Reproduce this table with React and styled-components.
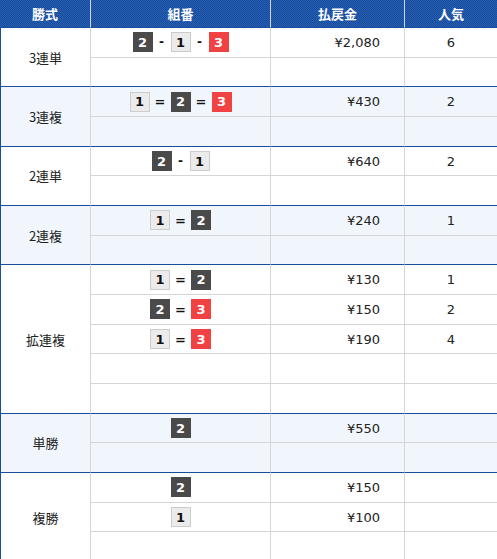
import styled, { createGlobalStyle } from "styled-components";

const GlobalStyle = createGlobalStyle`
    html, body {
        margin: 0;
        padding: 0;
        overflow: hidden;
        background: #fff;
    }
`;

const results = [
    { type: "3連単", rows: [{ combo: [2, "-", 1, "-", 3], pay: "¥2,080", pop: "6" }, {}] },
    { type: "3連複", rows: [{ combo: [1, "=", 2, "=", 3], pay: "¥430", pop: "2" }, {}] },
    { type: "2連単", rows: [{ combo: [2, "-", 1], pay: "¥640", pop: "2" }, {}] },
    { type: "2連複", rows: [{ combo: [1, "=", 2], pay: "¥240", pop: "1" }, {}] },
    {
        type: "拡連複",
        rows: [
            { combo: [1, "=", 2], pay: "¥130", pop: "1" },
            { combo: [2, "=", 3], pay: "¥150", pop: "2" },
            { combo: [1, "=", 3], pay: "¥190", pop: "4" },
            {},
            {},
        ],
    },
    { type: "単勝", rows: [{ combo: [2], pay: "¥550", pop: "" }, {}] },
    { type: "複勝", rows: [{ combo: [2], pay: "¥150", pop: "" }, { combo: [1], pay: "¥100", pop: "" }, {}] },
];

function App() {
    return (
        <>
            <GlobalStyle />
            <Table>
                <colgroup>
                    <col style={{ width: 91 }} />
                    <col style={{ width: 180 }} />
                    <col style={{ width: 134 }} />
                    <col style={{ width: 92 }} />
                </colgroup>
                <thead>
                    <tr>
                        <Th>勝式</Th>
                        <Th>組番</Th>
                        <Th>払戻金</Th>
                        <Th $last>人気</Th>
                    </tr>
                </thead>
                {results.map((group, gi) => (
                    <Group key={group.type} $alt={gi % 2 === 1}>
                        {group.rows.map((row, ri) => {
                            const end = ri === group.rows.length - 1;
                            return (
                                <Row key={ri}>
                                    {ri === 0 && <TypeCell rowSpan={group.rows.length}>{group.type}</TypeCell>}
                                    <ComboCell $end={end}>
                                        <Combo>
                                            {row.combo &&
                                                row.combo.map((c, i) =>
                                                    typeof c === "number" ? (
                                                        <Badge key={i} $num={c}>
                                                            {c}
                                                        </Badge>
                                                    ) : (
                                                        <Sep key={i} $dash={c === "-"}>
                                                            {c}
                                                        </Sep>
                                                    )
                                                )}
                                        </Combo>
                                    </ComboCell>
                                    <PayCell $end={end}>{row.pay}</PayCell>
                                    <PopCell $end={end}>{row.pop}</PopCell>
                                </Row>
                            );
                        })}
                    </Group>
                ))}
            </Table>
        </>
    );
}

const blue = "#1a4c9c";
const line = "#d6d6d6";

const Table = styled.table`
    width: 497px;
    table-layout: fixed;
    border-collapse: separate;
    border-spacing: 0;
    font-family: "DejaVu Sans", "Noto Sans CJK JP", sans-serif;
    font-size: 13px;
    color: #222;
`;

const Th = styled.th`
    box-sizing: border-box;
    height: 28px;
    padding: 0;
    background: repeating-conic-gradient(#164a9c 0 25%, #2a60b2 0 50%) 0 0 / 2px 2px;
    border-right: ${(p) => (p.$last ? "none" : `1px solid ${line}`)};
    border-bottom: 1px solid ${blue};
    color: #fff;
    font-family: "Noto Sans CJK JP", sans-serif;
    font-weight: bold;
    font-size: 13px;
    text-align: center;
    vertical-align: middle;
`;

const Group = styled.tbody`
    background: ${(p) => (p.$alt ? "#f1f6fd" : "#fff")};
`;

const Row = styled.tr`
    height: 29.68px;
`;

const Cell = styled.td`
    box-sizing: border-box;
    padding: 0;
    vertical-align: middle;
    border-bottom: 1px solid ${(p) => (p.$end ? blue : line)};
`;

const TypeCell = styled(Cell)`
    border-left: 1px solid ${blue};
    border-right: 1px solid ${line};
    border-bottom: 1px solid ${blue};
    text-align: center;
    font-family: "Noto Sans CJK JP", sans-serif;
`;

const ComboCell = styled(Cell)`
    border-right: 1px solid ${line};
    text-align: center;
`;

const Combo = styled.div`
    display: flex;
    justify-content: center;
    align-items: center;
`;

const badgeColors = {
    1: { bg: "#ebebeb", fg: "#111", border: "#cccccc" },
    2: { bg: "#4a4a4a", fg: "#fff", border: "#4a4a4a" },
    3: { bg: "#f04242", fg: "#fff", border: "#f04242" },
};

const Badge = styled.span`
    box-sizing: border-box;
    display: inline-flex;
    align-items: center;
    justify-content: center;
    width: 20px;
    height: 20px;
    background: ${(p) => badgeColors[p.$num].bg};
    color: ${(p) => badgeColors[p.$num].fg};
    border: 1px solid ${(p) => badgeColors[p.$num].border};
    font-weight: bold;
    font-size: 13px;
    line-height: 1;
`;

const Sep = styled.span`
    display: inline-block;
    width: ${(p) => (p.$dash ? "18px" : "21px")};
    text-align: center;
    font-weight: bold;
    font-size: ${(p) => (p.$dash ? "12px" : "13px")};
    color: #111;
`;

const PayCell = styled(Cell)`
    border-right: 1px solid ${line};
    text-align: right;
    padding-right: 24px;
`;

const PopCell = styled(Cell)`
    text-align: center;
`;

export default App;
